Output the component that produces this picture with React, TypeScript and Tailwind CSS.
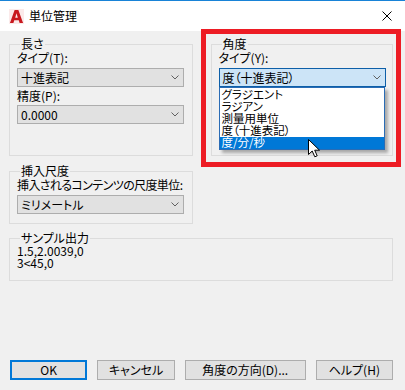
import React from "react";

const ui = "font-['Noto_Sans_CJK_JP','Noto_Sans',sans-serif] [font-feature-settings:'palt']";

function Chevron() {
  return (
    <svg width="8" height="5" viewBox="0 0 8 5" className="shrink-0">
      <path d="M0.5 0.5 L4 4 L7.5 0.5" fill="none" stroke="#606060" strokeWidth="1" />
    </svg>
  );
}

function Combo({ value, open = false }: { value: string; open?: boolean }) {
  return (
    <div
      className={`flex h-[19px] w-[167px] items-center justify-between border pl-[3px] pr-[4px] text-[12px] leading-none ${
        open ? "border-[#0d5fa8] bg-[#cce4f7]" : "border-[#adadad] bg-[#e1e1e1]"
      }`}
    >
      <span>{value}</span>
      <Chevron />
    </div>
  );
}

function Group({
  title,
  className,
  children,
}: {
  title: string;
  className?: string;
  children: React.ReactNode;
}) {
  return (
    <fieldset className={`min-w-0 border border-[#dcdcdc] px-[7px] ${className ?? ""}`}>
      <legend className="ml-[3px] px-[1px] text-[12px] leading-[12px]">{title}</legend>
      {children}
    </fieldset>
  );
}

function Button({ label, primary = false, w = "w-[78px]" }: { label: string; primary?: boolean; w?: string }) {
  return (
    <div
      className={`flex h-[20px] ${w} items-center justify-center bg-[#e1e1e1] text-[12px] leading-none ${
        primary ? "border-2 border-[#0078d7]" : "border border-[#adadad]"
      }`}
    >
      {label}
    </div>
  );
}

const options = ["グラジエント", "ラジアン", "測量用単位", "度（十進表記）", "度/分/秒"];

export default function App() {
  return (
    <div className={`relative h-[390px] w-[405px] overflow-hidden bg-[#f0f0f0] text-black ${ui}`}>
      {/* Title bar */}
      <div className="flex h-[31px] items-center border-t border-[#1883d7] bg-white pl-[9px] pr-[13px]">
        <svg width="15" height="15" viewBox="0 0 16 16">
          <rect x="0" y="0" width="16" height="16" fill="#fbeaea" />
          <path
            d="M1 15 L6 1 L10 1 L15 15 L11.3 15 L10.4 12 L5.6 12 L4.7 15 Z M6.6 9.2 L9.4 9.2 L8 4.6 Z"
            fill="#c8191f"
            fillRule="evenodd"
          />
        </svg>
        <span className="ml-[5px] text-[12px] leading-none">単位管理</span>
        <svg width="10" height="10" viewBox="0 0 10 10" className="ml-auto">
          <path d="M0.5 0.5 L9.5 9.5 M9.5 0.5 L0.5 9.5" stroke="#000" strokeWidth="1" />
        </svg>
      </div>

      <div className="flex flex-col pl-[9px] pr-[12px] pt-[7px]">
        {/* Top groups */}
        <div className="flex gap-[18px]">
          <Group title="長さ" className="h-[118px] w-[184px]">
            <div className="mt-[1px] text-[12px] leading-[14px]">タイプ(T):</div>
            <div className="mt-[3px]">
              <Combo value="十進表記" />
            </div>
            <div className="mt-[2px] text-[12px] leading-[14px]">精度(P):</div>
            <div className="mt-[2px]">
              <Combo value="0.0000" />
            </div>
          </Group>
          <Group title="角度" className="h-[118px] w-[183px]">
            <div className="mt-[1px] text-[12px] leading-[14px]">タイプ(Y):</div>
            <div className="relative mt-[3px]">
              <Combo value="度（十進表記）" open />
              <div className="absolute left-0 top-full z-10 flex h-[63px] w-[166px] flex-col border border-[#2a6cb5] bg-white shadow-[3px_3px_3px_rgba(0,0,0,0.3)]">
                {options.map((o, i) => (
                  <div
                    key={o}
                    className={`flex h-[12.2px] items-center overflow-visible pl-[2px] text-[11.5px] leading-[11px] ${
                      i === options.length - 1 ? "bg-[#0078d7] text-white" : ""
                    }`}
                  >
                    {o}
                  </div>
                ))}
              </div>
            </div>
          </Group>
        </div>

        <Group title="挿入尺度" className="mt-[9px] h-[59px] w-[184px]">
          <div className="mt-[1px] whitespace-nowrap text-[12px] leading-[14px] tracking-[-0.6px]">
            挿入されるコンテンツの尺度単位:
          </div>
          <div className="mt-[3px]">
            <Combo value="ミリメートル" />
          </div>
        </Group>

        <Group title="サンプル出力" className="mt-[8px] h-[49px] w-[384px]">
          <div className="mt-[1px] text-[12px] leading-[12px]">1.5,2.0039,0</div>
          <div className="text-[12px] leading-[12px]">3&lt;45,0</div>
        </Group>

        {/* Buttons */}
        <div className="mt-[79px] flex gap-[10px] pl-[1px]">
          <Button label="OK" primary />
          <Button label="キャンセル" />
          <Button label="角度の方向(D)..." w="w-[122px]" />
          <Button label="ヘルプ(H)" />
        </div>
      </div>

      {/* Red highlight annotation */}
      <div className="pointer-events-none absolute left-[201px] top-[29px] z-20 h-[138px] w-[200px] border-[5px] border-[#ed1c24]" />

      {/* Mouse cursor */}
      <svg width="13" height="19" viewBox="0 0 13 19" className="absolute left-[308px] top-[139px] z-30">
        <path
          d="M0.5 0.5 L0.5 15.5 L4.2 12 L6.8 17.8 L9.2 16.8 L6.7 11.2 L11.5 11.2 Z"
          fill="#fff"
          stroke="#000"
          strokeWidth="1"
          strokeLinejoin="round"
        />
      </svg>
    </div>
  );
}
